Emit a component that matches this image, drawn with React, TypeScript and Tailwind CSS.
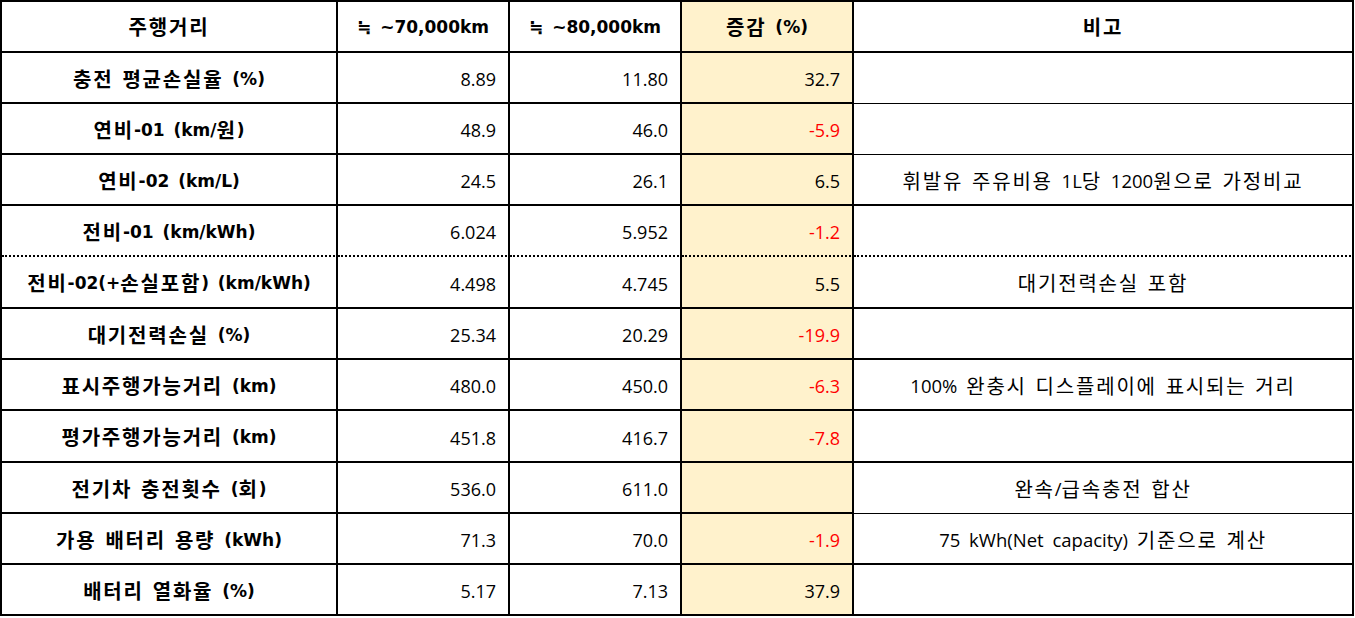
import React from "react";

type Row = {
  label: string;
  a: string;
  b: string;
  d: string;
  red?: boolean;
  note?: string;
  h: string;
  bottom?: "solid" | "dotted";
  thinNote?: boolean;
};

const rows: Row[] = [
  { label: "충전 평균손실율 (%)", a: "8.89", b: "11.80", d: "32.7", h: "h-[51px]", thinNote: true },
  { label: "연비-01 (km/원)", a: "48.9", b: "46.0", d: "-5.9", red: true, h: "h-[51px]", thinNote: true },
  { label: "연비-02 (km/L)", a: "24.5", b: "26.1", d: "6.5", note: "휘발유 주유비용 1L당 1200원으로 가정비교", h: "h-[51px]" },
  { label: "전비-01 (km/kWh)", a: "6.024", b: "5.952", d: "-1.2", red: true, h: "h-[51px]", bottom: "dotted" },
  { label: "전비-02(+손실포함) (km/kWh)", a: "4.498", b: "4.745", d: "5.5", note: "대기전력손실 포함", h: "h-[52px]" },
  { label: "대기전력손실 (%)", a: "25.34", b: "20.29", d: "-19.9", red: true, h: "h-[51px]" },
  { label: "표시주행가능거리 (km)", a: "480.0", b: "450.0", d: "-6.3", red: true, note: "100% 완충시 디스플레이에 표시되는 거리", h: "h-[51px]" },
  { label: "평가주행가능거리 (km)", a: "451.8", b: "416.7", d: "-7.8", red: true, h: "h-[52px]" },
  { label: "전기차 충전횟수 (회)", a: "536.0", b: "611.0", d: "", note: "완속/급속충전 합산", h: "h-[51px]", thinNote: true },
  { label: "가용 배터리 용량 (kWh)", a: "71.3", b: "70.0", d: "-1.9", red: true, note: "75 kWh(Net capacity) 기준으로 계산", h: "h-[51px]" },
  { label: "배터리 열화율 (%)", a: "5.17", b: "7.13", d: "37.9", h: "h-[51px]" },
];

const regular = { fontFamily: '"Open Sans", "Noto Sans CJK KR", sans-serif' };
const bold = { fontFamily: '"DejaVu Sans", "Noto Sans CJK KR", sans-serif' };
const cjk = { fontFamily: '"Noto Sans CJK KR", sans-serif' };

function Mixed({ text }: { text: string }) {
  const parts = text.split(/([\uAC00-\uD7A3\u3131-\u318E]+)/);
  return (
    <>
      {parts.map((p, i) =>
        /[\uAC00-\uD7A3]/.test(p) ? (
          <span key={i} className="text-[20px] tracking-[1.8px]" style={cjk}>
            {p}
          </span>
        ) : (
          <span key={i}>{p}</span>
        )
      )}
    </>
  );
}

const HCell = ({ children, extra = "" }: { children: React.ReactNode; extra?: string }) => (
  <div
    className={`border-r-2 border-black flex items-center justify-center font-bold text-[17px] [word-spacing:3px] whitespace-pre ${extra}`}
    style={bold}
  >
    {children}
  </div>
);

export default function App() {
  return (
    <div className="w-[1355px] h-[618px] bg-white overflow-hidden text-[18px] leading-[24px] text-black" style={regular}>
      <div className="w-[1354px] border-l-2 border-t-2 border-black">
        <div className="flex h-[51px]">
          <HCell extra="w-[336px] border-b-2">
            <Mixed text="주행거리" />
          </HCell>
          <HCell extra="w-[172px] border-b-2">≒ ~70,000km</HCell>
          <HCell extra="w-[172px] border-b-2">≒ ~80,000km</HCell>
          <HCell extra="w-[172px] border-b-2 bg-[#fff2cc]">
            <Mixed text="증감 (%)" />
          </HCell>
          <HCell extra="flex-1 border-b-2">
            <Mixed text="비고" />
          </HCell>
        </div>
        {rows.map((r, i) => {
          const b = r.bottom === "dotted" ? "border-b-2 [border-bottom-style:dotted]" : "border-b-2";
          const nb = r.bottom === "dotted" ? "border-b-2 [border-bottom-style:dotted]" : r.thinNote ? "border-b" : "border-b-2";
          return (
            <div key={i} className={`flex ${r.h}`}>
              <HCell extra={`w-[336px] pt-[2px] ${b}`}>
                <Mixed text={r.label} />
              </HCell>
              <div className={`w-[172px] border-r-2 border-black ${b} flex items-center justify-end pt-[3px] pr-[12px]`}>{r.a}</div>
              <div className={`w-[172px] border-r-2 border-black ${b} flex items-center justify-end pt-[3px] pr-[12px]`}>{r.b}</div>
              <div
                className={`w-[172px] border-r-2 border-black ${b} flex items-center justify-end pt-[3px] pr-[12px] bg-[#fff2cc] ${
                  r.red ? "text-[#ff0000]" : ""
                }`}
              >
                {r.d}
              </div>
              <div
                className={`flex-1 border-r-2 border-black ${nb} flex items-center justify-center pt-[2px] text-[18.5px] [word-spacing:4px] whitespace-pre`}
              >
                {r.note ? <Mixed text={r.note} /> : ""}
              </div>
            </div>
          );
        })}
      </div>
    </div>
  );
}
